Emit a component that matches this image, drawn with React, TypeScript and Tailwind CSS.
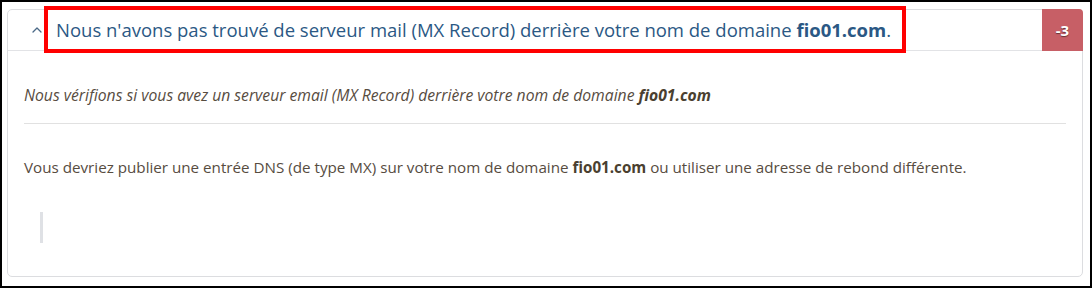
import React from 'react'

const Chevron = () => (
  <svg width="10" height="6" viewBox="0 0 10 6" fill="none">
    <path d="M1 5L5 1L9 5" stroke="#4b6987" strokeWidth="1.3" strokeLinecap="round" strokeLinejoin="round" />
  </svg>
)

export default function App() {
  return (
    <div
      className="w-[1092px] h-[288px] border-2 border-black bg-white pt-[7px] pl-[5px] pr-[8px]"
      style={{ fontFamily: '"Open Sans", "Liberation Sans", sans-serif' }}
    >
      {/* Result card */}
      <div className="relative w-[1076px] h-[268px] border border-[#dcdde0] rounded-[5px] flex flex-col">
        {/* Header */}
        <div className="flex items-center h-[41px] border-b border-[#e2e3e6] pl-[24px] shrink-0">
          <Chevron />
          <div className="relative ml-[14px] text-[18.5px] leading-[24px] text-[#2b5884]">
            Nous n'avons pas trouvé de serveur mail (MX Record) derrière votre nom de domaine{' '}
            <b className="font-bold">fio01.com</b>.
            <div className="absolute -left-[12px] -right-[15px] -top-[12px] -bottom-[11px] border-4 border-[#ff0000]" />
          </div>
        </div>
        <div className="absolute -top-px -right-px w-[41px] h-[42px] bg-[#c75f66] flex items-center justify-center rounded-tr-[4px]">
          <span className="text-white font-bold text-[15px] [text-shadow:0_1px_1px_rgba(0,0,0,0.5)]">-3</span>
        </div>

        {/* Body */}
        <div className="flex flex-col px-4 pt-[34px] text-[15.2px] leading-[20px] text-[#574c3f]">
          <p className="italic text-[15.7px]">
            Nous vérifions si vous avez un serveur email (MX Record) derrière votre nom de domaine{' '}
            <b className="font-bold text-[#4a3f30]">fio01.com</b>
          </p>
          <hr className="mt-[18px] border-t border-[#e1e1e1]" />
          <p className="mt-[33px]">
            Vous devriez publier une entrée DNS (de type MX) sur votre nom de domaine{' '}
            <b className="font-bold text-[#4a3f30]">fio01.com</b> ou utiliser une adresse de rebond différente.
          </p>
          <blockquote className="mt-[35px] ml-4 h-[31px] border-l-[3px] border-[#dfe1e5]" />
        </div>
      </div>
    </div>
  )
}
